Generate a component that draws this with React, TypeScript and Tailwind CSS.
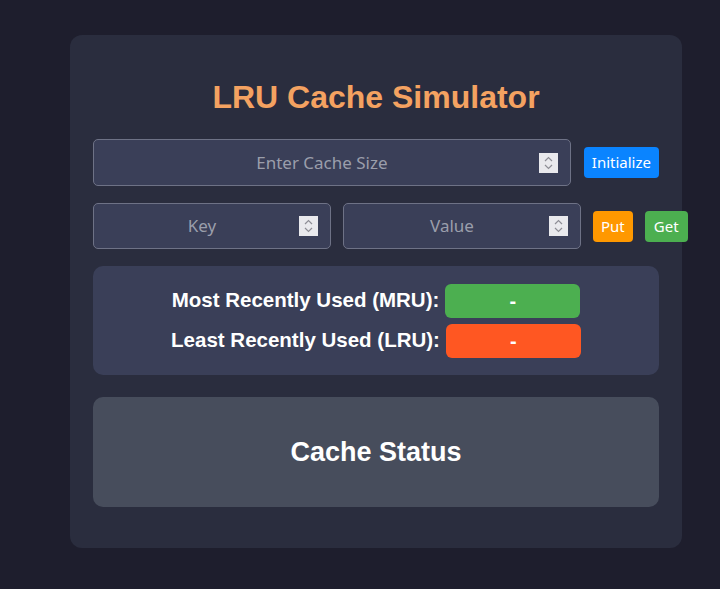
import React from 'react'

const Spinner = () => (
    <div className="flex h-[20px] w-[19px] flex-col items-center justify-center bg-[#e9e9ed]">
        <svg width="9" height="14" viewBox="0 0 9 14" fill="none" stroke="#8e8e96" strokeWidth="1.2">
            <path d="M1 5 L4.5 1.5 L8 5" />
            <path d="M1 9 L4.5 12.5 L8 9" />
        </svg>
    </div>
)

const NumberField = ({ placeholder, className }: { placeholder: string; className: string }) => (
    <div
        className={`relative flex items-center justify-center rounded-[5px] border border-[#6e7286] bg-[#3a3f58] pr-[20px] ${className}`}
    >
        <span className="text-[17px] text-[#9a9eab]">{placeholder}</span>
        <div className="absolute right-[12px] top-1/2 -translate-y-1/2">
            <Spinner />
        </div>
    </div>
)

const App: React.FC = () => {
    return (
        <div className="h-[589px] w-[720px] overflow-hidden bg-[#1e1e2d] pt-[35px] pl-[70px] font-['Liberation_Sans',Arial,sans-serif]">
            <div className="flex h-[513px] w-[612px] flex-col rounded-[12px] bg-[#2a2d3e] px-[23px] pt-[43px]">
                <h1 className="text-center text-[32px] font-bold leading-[38px] text-[#f4a261]">
                    LRU Cache Simulator
                </h1>

                <div className="mt-[23px] flex items-center gap-[13px] font-['Noto_Sans',sans-serif]">
                    <NumberField placeholder="Enter Cache Size" className="h-[47px] w-[478px]" />
                    <button className="h-[31px] rounded-[4px] bg-[#0a84ff] px-[8px] text-[15px] text-white">
                        Initialize
                    </button>
                </div>

                <div className="mt-[17px] flex items-center gap-[12px] font-['Noto_Sans',sans-serif]">
                    <NumberField placeholder="Key" className="h-[46px] w-[238px] shrink-0" />
                    <NumberField placeholder="Value" className="h-[46px] w-[238px] shrink-0" />
                    <button className="h-[31px] shrink-0 rounded-[4px] bg-[#ff9800] px-[8px] text-[15px] text-white">
                        Put
                    </button>
                    <button className="h-[31px] shrink-0 rounded-[4px] bg-[#4caf50] px-[9px] text-[15px] text-white">
                        Get
                    </button>
                </div>

                <div className="mt-[17px] flex h-[109px] flex-col items-center justify-center gap-[6px] rounded-[10px] bg-[#3a3f58]">
                    <div className="flex items-center gap-[6px]">
                        <span className="text-[20.5px] font-bold text-white">Most Recently Used (MRU):</span>
                        <div className="flex h-[34px] w-[135px] items-center justify-center rounded-[6px] bg-[#4caf50] text-[20px] font-bold text-white">
                            -
                        </div>
                    </div>
                    <div className="flex items-center gap-[6px]">
                        <span className="text-[20.5px] font-bold text-white">Least Recently Used (LRU):</span>
                        <div className="flex h-[34px] w-[135px] items-center justify-center rounded-[6px] bg-[#ff5722] text-[20px] font-bold text-white">
                            -
                        </div>
                    </div>
                </div>

                <div className="mt-[22px] flex h-[110px] items-center justify-center rounded-[10px] bg-[#474d5c]">
                    <h2 className="text-[27px] font-bold text-white">Cache Status</h2>
                </div>
            </div>
        </div>
    )
}

export default App
